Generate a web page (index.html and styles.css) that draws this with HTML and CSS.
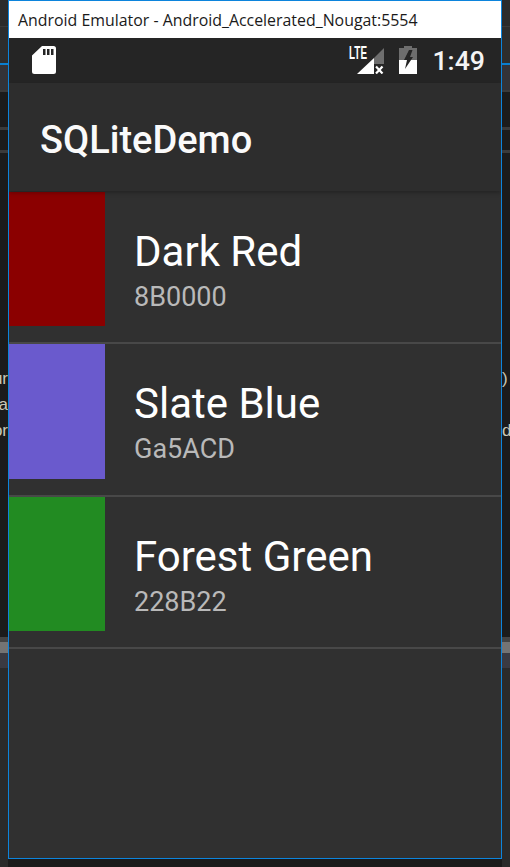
FILE: index.html
```html
<!DOCTYPE html>
<html lang="en">
<head>
<meta charset="utf-8">
<title>Android Emulator</title>
<link rel="stylesheet" href="styles.css">
</head>
<body>
<div class="desktop">
  <div class="strip strip-left">
    <div class="peek">ur</div>
    <div class="peek">.a</div>
    <div class="peek">or</div>
  </div>
  <div class="window">
    <div class="titlebar">Android Emulator - Android_Accelerated_Nougat:5554</div>
    <div class="statusbar">
      <svg class="sd" width="24" height="28" viewBox="0 0 24 28"><path fill="#fff" fill-rule="evenodd" d="M10 0H21.500A2.500 2.500 0 0 1 24 2.500V25.500A2.500 2.500 0 0 1 21.500 28H2.500A2.500 2.500 0 0 1 0 25.500V9.500ZM11 3V9H13.500V3ZM15 3V9H17.500V3ZM19 3V9H21.500V3Z"/></svg>
      <div class="status-right">
        <svg class="signal" width="36" height="28" viewBox="0 0 36 28">
          <path fill="#6e6e6e" d="M36 2V18H26V12Z"/>
          <path fill="#fff" d="M26 12V28H9Z"/>
          <path fill="none" stroke="#fff" stroke-width="2.200" d="M28 20.500L34.500 27.500M34.500 20.500L28 27.500"/>
          <text class="lte" x="1" y="13" textLength="18" lengthAdjust="spacingAndGlyphs">LTE</text>
        </svg>
        <svg class="battery" width="18" height="28" viewBox="0 0 18 28">
          <path fill="#6e6e6e" d="M5 0H13V2H18V14H0V2H5Z"/>
          <path fill="#fff" d="M0 14H18V28H0Z"/>
          <path fill="#252525" d="M10 4H13.500L11 11H14L6 23L8 14H5Z"/>
        </svg>
        <span class="clock">1:49</span>
      </div>
    </div>
    <div class="appbar">SQLiteDemo</div>
    <div class="list">
      <div class="row">
        <div class="swatch dark-red"></div>
        <div class="labels"><div class="name">Dark Red</div><div class="code">8B0000</div></div>
      </div>
      <div class="row">
        <div class="swatch slate-blue"></div>
        <div class="labels"><div class="name">Slate Blue</div><div class="code">Ga5ACD</div></div>
      </div>
      <div class="row">
        <div class="swatch forest-green"></div>
        <div class="labels"><div class="name">Forest Green</div><div class="code">228B22</div></div>
      </div>
    </div>
  </div>
  <div class="strip strip-right">
    <div class="peek">)</div>
    <div class="peek">&nbsp;</div>
    <div class="peek">de</div>
  </div>
</div>
</body>
</html>
```
FILE: styles.css
```css
* { box-sizing: border-box; }
html, body { margin: 0; padding: 0; }
body { width: 510px; height: 867px; overflow: hidden; background: #1b1b1b; }
.desktop { display: grid; grid-template-columns: 8px 494px 8px; height: 867px; }
.strip {
  height: 867px;
  overflow: hidden;
  padding-top: 366px;
  font: 17px/26px "Liberation Sans", sans-serif;
  color: #c8c8b8;
  background: linear-gradient(to bottom,
    #2b2b2b 0 26px, #3a3a3a 26px 27px, #2d2d2d 27px 63px, #0a7fd0 63px 65px,
    #333338 65px 90px, #3a3a3a 90px 92px, #1b1b1b 92px 127px, #3a3a3a 127px 130px,
    #1b1b1b 130px 150px, #3a3a3a 150px 153px, #1b1b1b 153px 637px,
    #444 637px 642px, #747474 642px 653px, #3a3a42 653px 668px, #2a2a2a 668px 867px);
}
.strip-left .peek { display: flex; justify-content: flex-end; white-space: nowrap; }
.strip-right .peek { white-space: nowrap; }
.peek { height: 26px; }
.window {
  height: 859px;
  border: 1px solid #0c84dc;
  background: #303030;
  display: flex;
  flex-direction: column;
  overflow: hidden;
}
.titlebar {
  height: 37px;
  background: #fff;
  color: #1a1a1a;
  font: 15.900px/38px "Open Sans", sans-serif;
  padding-left: 9px;
  white-space: nowrap;
}
.statusbar {
  height: 45px;
  background: #252525;
  display: flex;
  align-items: center;
  justify-content: space-between;
  padding: 0 16px 0 23px;
}
.sd { display: block; margin-top: -1px; }
.status-right { display: flex; align-items: center; }
.signal { display: block; margin-right: 15px; }
.lte { font: 700 18px "Liberation Sans", sans-serif; fill: #fff; }
.battery { display: block; margin-right: 15px; }
.clock { font: 500 26.700px/1 Roboto, sans-serif; color: #f4f4f4; margin-top: 2px; }
.appbar {
  height: 108px;
  background: #2d2d2d;
  color: #fafafa;
  font: 500 38px/115px Roboto, sans-serif;
  padding-left: 31px;
  box-shadow: 0 2px 4px rgba(0, 0, 0, .25);
  position: relative;
}
.list { display: flex; flex-direction: column; padding-top: .5px; }
.row {
  display: flex;
  height: 152.500px;
  padding-bottom: 16px;
  border-bottom: 2px solid #484848;
}
.swatch { width: 96px; height: 134.500px; flex: none; }
.dark-red { background: #8b0000; }
.slate-blue { background: #6a5acd; }
.forest-green { background: #228b22; }
.labels { padding: 32px 0 0 29px; }
.name { font: 400 42px/55px Roboto, sans-serif; color: #fff; }
.code { font: 400 27px/32px Roboto, sans-serif; color: #b9b9b9; margin-top: 2px; }
```
